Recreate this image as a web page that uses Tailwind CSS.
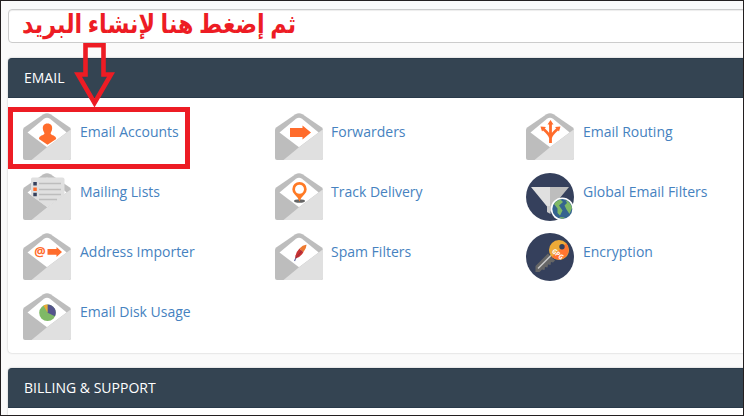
<!DOCTYPE html>
<html lang="en">
<head>
  <meta charset="utf-8">
  <title>Email</title>
  <script src="https://cdn.jsdelivr.net/npm/@tailwindcss/browser@4"></script>
</head>
<body class="w-[744px] h-[416px] overflow-hidden bg-[#fafafa] font-['Open_Sans',sans-serif] text-sm">

  <!-- shared icon backgrounds -->
  <svg class="hidden">
    <symbol id="envelope" viewBox="0 0 48 48">
      <path d="M0 17Q0 15.500 1.500 14.300L20.500 1.200Q24 -.8 27.500 1.200L46.500 14.300Q48 15.500 48 17V45Q48 47 46 47H2Q0 47 0 45Z" fill="#bdbdbd"/>
      <path d="M4.500 19.500L21 5.700Q24 3.600 27 5.700L43.700 19.500L24 34.300Z" fill="#fff"/>
      <path d="M48 16.300V45Q48 47 46 47H8.500L24 34.300Z" fill="#e0e0e0"/>
    </symbol>
  </svg>

  <div class="relative w-[744px] h-[416px] overflow-hidden border border-[#231f20] pl-[7px] pt-2">

    <div class="h-[34px] w-[760px] rounded border border-[#ccc] bg-white shadow-[inset_0_1px_1px_rgba(0,0,0,0.075)]"></div>

    <section class="mt-[15px] w-[760px] h-[295px] rounded bg-white shadow-[0_0_2px_rgba(0,0,0,0.25)]">
      <h2 class="h-10 rounded-t border-y border-[#293a4a] bg-[#344452] px-4 leading-[38px] text-white">EMAIL</h2>
      <div class="grid grid-cols-[252px_251px_251px] auto-rows-[60px] pl-[15px] pt-[15px] text-[#4682c0]">

        <a class="flex gap-[9px]">
          <svg class="size-12" viewBox="0 0 48 48">
            <use href="#envelope"/>
            <path d="M24.500 10.500c3.500 0 5 2.400 4.600 5.600c-.2 2.500-1.300 3-1.500 4.400c.8 2 5.400 1.800 5.600 5.500L24.500 31.800L16 26c0-3.700 4.700-3.500 5.500-5.500c-.3-1.500-1.400-1.900-1.600-4.400c-.4-3.200 1.100-5.600 4.600-5.600Z" fill="#ff6c2c"/>
          </svg>
          <span class="pt-2.25">Email Accounts</span>
        </a>
        <a class="flex gap-2">
          <svg class="size-12" viewBox="0 0 48 48">
            <use href="#envelope"/>
            <path d="M15 15H27.500V12.500L36 19.500L27.500 26.500V24H15Z" fill="#ff6c2c"/>
          </svg>
          <span class="pt-2.25">Forwarders</span>
        </a>
        <a class="flex gap-[9px]">
          <svg class="size-12" viewBox="0 0 48 48">
            <use href="#envelope"/>
            <path d="M24.500 30V10M24.500 25Q24 22 17.500 16M24.500 25Q25 22 31.500 16" fill="none" stroke="#ff6c2c" stroke-width="2.800"/>
            <path d="M24.500 7L27.500 11.500H21.500ZM14.500 13.500L20 14L16 18.500ZM34.500 13.500L29 14L33 18.500Z" fill="#ff6c2c"/>
          </svg>
          <span class="pt-2.25">Email Routing</span>
        </a>

        <a class="flex gap-[9px]">
          <svg class="size-12" viewBox="0 0 48 48">
            <use href="#envelope"/>
            <path d="M9.500 4.500H39.500Q41.500 4.500 41.500 6.500V21.500L24 34.300L8 23V6.500Q8 4.500 9.500 4.500Z" fill="#e0e0e0"/>
            <path d="M16 10.500H38M16 16.500H38M16 21.500H38M16 26.500H34" stroke="#bdbdbd" stroke-width="1.500"/>
            <path d="M10.300 9H13.800V12.500H10.300ZM10.300 19.800H13.800V23.300H10.300Z" fill="#35405c"/>
            <path d="M10.300 14.500H13.800V18H10.300Z" fill="#ff6c2c"/>
            <path d="M7 22L24 34.300L12 43H4Z" fill="#bdbdbd"/>
          </svg>
          <span class="pt-2.25">Mailing Lists</span>
        </a>
        <a class="flex gap-2">
          <svg class="size-12" viewBox="0 0 48 48">
            <use href="#envelope"/>
            <ellipse cx="24.500" cy="28" rx="5.500" ry="1.800" fill="#666"/>
            <path d="M24.500 28.500Q23 24.500 19.500 21.300A7.200 7.200 0 1 1 29.500 21.300Q26 24.500 24.500 28.500Z" fill="#ff7a25"/>
            <circle cx="24.500" cy="16.200" r="4.500" fill="#fff"/>
          </svg>
          <span class="pt-2.25">Track Delivery</span>
        </a>
        <a class="flex gap-[9px]">
          <svg class="size-12" viewBox="0 0 48 48">
            <circle cx="24" cy="24" r="24" fill="#35405c"/>
            <path d="M5 14H24V38L21 33.500Z" fill="#e0e0e0"/>
            <path d="M24 14H43L28 32V41L24 38Z" fill="#bdbdbd"/>
            <path d="M21 33H24.500V41L21 39Z" fill="#ccc"/>
            <circle cx="36.300" cy="36" r="11.500" fill="#fff"/>
            <circle cx="36.300" cy="36" r="10" fill="#35648f"/>
            <path d="M28 31Q30 27.500 34.500 26.500L37 29L33 32.500L36.500 37.500L34 42.500L31.500 40V35.500ZM39.500 27Q45 29.500 46 35L43.500 41L40.500 36.500L38.500 32.500L41 30ZM33 44L39 44.500L36 46Z" fill="#7fb966"/>
          </svg>
          <span class="pt-2.25">Global Email Filters</span>
        </a>

        <a class="flex gap-[9px]">
          <svg class="size-12" viewBox="0 0 48 48">
            <use href="#envelope"/>
            <text x="11.200" y="22.700" font-size="12.500" font-weight="700" fill="#ff6c2c" textLength="11.500" lengthAdjust="spacingAndGlyphs">@</text>
            <path d="M24.500 16H33.500V14L39 19L33.500 24V21.800H24.500Z" fill="#ff6c2c"/>
          </svg>
          <span class="pt-2.25">Address Importer</span>
        </a>
        <a class="flex gap-2">
          <svg class="size-12" viewBox="0 0 48 48">
            <use href="#envelope"/>
            <path d="M19.500 28L21.500 23.500" stroke="#656b9e" stroke-width="1.200"/>
            <path d="M20.500 25.500Q19.500 20.500 24.500 15.500L28.500 19Q26 24 20.500 25.500Z" fill="#c83232"/>
            <path d="M24.500 15.500Q28 11.500 31.500 11.800Q31.500 15.500 28.500 19Z" fill="#ee7a30"/>
            <path d="M21 25L27 17.500" stroke="#7d2945" stroke-width=".6"/>
          </svg>
          <span class="pt-2.25">Spam Filters</span>
        </a>
        <a class="flex gap-[9px]">
          <svg class="size-12" viewBox="0 0 48 48">
            <circle cx="24" cy="24" r="24" fill="#35405c"/>
            <path d="M22 20.500L29 27.500L27 29.500L25 29L24.500 32L22 31.500L21.500 34.500L19 34L18.500 37L16 36.500L13.500 39H9.500V33Z" fill="#666"/>
            <path d="M12 35.500L25 22.500" stroke="#ccc" stroke-width="1.500"/>
            <circle cx="33" cy="17" r="10" fill="#eeaa37"/>
            <path d="M40.300 10.200A10 10 0 0 1 25.900 24Z" fill="#ff7530"/>
            <circle cx="36" cy="13.700" r="2.700" fill="#35405c"/>
            <text x="25.500" y="19" font-size="7" font-weight="700" fill="#fff" transform="rotate(40 25.500 19)" textLength="12.500" lengthAdjust="spacingAndGlyphs">GPG</text>
          </svg>
          <span class="pt-2.25">Encryption</span>
        </a>

        <a class="flex gap-[9px]">
          <svg class="size-12" viewBox="0 0 48 48">
            <use href="#envelope"/>
            <circle cx="24.500" cy="19.800" r="8.300" fill="#7fb966"/>
            <path d="M24.500 19.800V11.500A8.300 8.300 0 0 1 32 23.300Z" fill="#54548c"/>
            <path d="M24.500 19.800L20.500 12.500A8.300 8.300 0 0 1 24.500 11.500Z" fill="#eeaa37"/>
          </svg>
          <span class="pt-2.25">Email Disk Usage</span>
        </a>
      </div>
    </section>

    <section class="mt-[15px] w-[760px] h-20 rounded bg-white shadow-[0_0_2px_rgba(0,0,0,0.25)]">
      <h2 class="h-10 rounded-t border-y border-[#293a4a] bg-[#344452] px-4 leading-[38px] text-white">BILLING &amp; SUPPORT</h2>
    </section>

    <!-- red annotations drawn over the page -->
    <svg class="absolute -left-px -top-px" width="744" height="416" viewBox="0 0 744 416">
      <path d="M85.500 45.300H103.500V74.500H111L94.500 103L78 74.500H85.500Z" fill="none" stroke="#ed1c24" stroke-width="4.600"/>
      <rect x="10.500" y="109.500" width="177" height="57" fill="none" stroke="#ed1c24" stroke-width="5"/>
      <text x="296" y="32.500" direction="rtl" lang="ar" font-family="'Liberation Serif', 'DejaVu Sans', serif" font-size="26" font-weight="700" fill="#ed1c24" textLength="274" lengthAdjust="spacingAndGlyphs">ثم إضغط هنا لإنشاء البريد</text>
    </svg>
  </div>

</body>
</html>
